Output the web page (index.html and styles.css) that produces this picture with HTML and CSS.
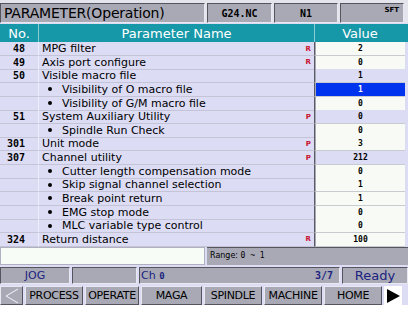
FILE: index.html
```html
<!DOCTYPE html>
<html>
<head>
<meta charset="utf-8">
<link rel="stylesheet" href="styles.css">
</head>
<body>
<div class="screen">
  <div class="titlebar">
    <div class="tcell title">PARAMETER(Operation)</div>
    <div class="tcell mono">G24.NC</div>
    <div class="tcell mono">N1</div>
    <div class="tcell sft">SFT</div>
  </div>
  <div class="thead">
    <div class="hcell">No.</div>
    <div class="hcell">Parameter Name</div>
    <div class="hcell">Value</div>
  </div>
  <div class="tbody">
    <div class="row"><div class="no">48</div><div class="name">MPG filter<span class="flag">R</span></div><div class="val">2</div></div>
    <div class="row"><div class="no">49</div><div class="name">Axis port configure<span class="flag">R</span></div><div class="val">0</div></div>
    <div class="row"><div class="no">50</div><div class="name">Visible macro file</div><div class="val lav">1</div></div>
    <div class="row"><div class="no"></div><div class="name sub">Visibility of O macro file</div><div class="val sel">1</div></div>
    <div class="row"><div class="no"></div><div class="name sub">Visibility of G/M macro file</div><div class="val">0</div></div>
    <div class="row"><div class="no">51</div><div class="name">System Auxiliary Utility<span class="flag">P</span></div><div class="val lav">0</div></div>
    <div class="row"><div class="no"></div><div class="name sub">Spindle Run Check</div><div class="val">0</div></div>
    <div class="row"><div class="no">301</div><div class="name">Unit mode<span class="flag">P</span></div><div class="val">3</div></div>
    <div class="row"><div class="no">307</div><div class="name">Channel utility<span class="flag">P</span></div><div class="val lav">212</div></div>
    <div class="row"><div class="no"></div><div class="name sub">Cutter length compensation mode</div><div class="val">0</div></div>
    <div class="row"><div class="no"></div><div class="name sub">Skip signal channel selection</div><div class="val">1</div></div>
    <div class="row"><div class="no"></div><div class="name sub">Break point return</div><div class="val">1</div></div>
    <div class="row"><div class="no"></div><div class="name sub">EMG stop mode</div><div class="val">0</div></div>
    <div class="row"><div class="no"></div><div class="name sub">MLC variable type control</div><div class="val">0</div></div>
    <div class="row"><div class="no">324</div><div class="name">Return distance<span class="flag">R</span></div><div class="val">100</div></div>
  </div>
  <div class="inputrow">
    <div class="input"></div>
    <div class="range">Range: <span class="mono">0 ~ 1</span></div>
  </div>
  <div class="status">
    <div class="scell jog">JOG</div>
    <div class="scell"></div>
    <div class="scell ch"><span>Ch <b class="mono">0</b></span><span class="mono pg">3/7</span></div>
    <div class="scell ready">Ready</div>
  </div>
  <div class="nav">
    <div class="nbtn arrow"><svg width="16" height="16" viewBox="0 0 16 16"><path d="M14 1 L2 8 L14 15" fill="none" stroke="#f4f4f8" stroke-width="1"/></svg></div>
    <div class="nbtn">PROCESS</div>
    <div class="nbtn">OPERATE</div>
    <div class="nbtn">MAGA</div>
    <div class="nbtn">SPINDLE</div>
    <div class="nbtn">MACHINE</div>
    <div class="nbtn">HOME</div>
    <div class="nbtn arrow"><svg width="16" height="16" viewBox="0 0 16 16"><path d="M2 1 L15 8 L2 15 Z" fill="#000"/></svg></div>
  </div>
</div>
</body>
</html>
```
FILE: styles.css
```css
html, body {
  margin: 0;
  padding: 0;
  background: #ffffff;
}
.screen {
  width: 408px;
  background: #dcdcf4;
  font-family: "DejaVu Sans", Verdana, sans-serif;
  display: flex;
  flex-direction: column;
  box-sizing: border-box;
}
.mono {
  font-family: "DejaVu Sans Mono", monospace;
}
.titlebar {
  display: grid;
  grid-template-columns: 205px 65px 64px 64px;
  column-gap: 2px;
  padding-top: 3px;
  height: 23px;
  background: #e4e4ec;
  box-sizing: border-box;
}
.tcell {
  background: #a9a9b6;
  border: 1px solid #55555f;
  border-right-color: #e8e8f0;
  border-bottom-color: #e8e8f0;
  display: flex;
  align-items: center;
  justify-content: center;
  font-size: 10px;
  font-weight: bold;
  color: #000;
  box-sizing: border-box;
}
.tcell.title {
  justify-content: flex-start;
  padding-left: 3px;
  font-size: 14px;
  font-weight: normal;
  letter-spacing: -0.2px;
}
.tcell.sft {
  justify-content: flex-end;
  align-items: flex-start;
  padding: 2px 4px 0 0;
  font-size: 7px;
}
.thead {
  display: grid;
  grid-template-columns: 39px 276px 90px;
  height: 18px;
  margin-top: 1px;
  background: #1798a8;
  color: #fff;
  font-size: 13px;
}
.hcell {
  display: flex;
  align-items: center;
  justify-content: center;
  border-right: 1px solid #8ccdd6;
}
.hcell:last-child {
  border-right: none;
}
.tbody {
  display: flex;
  flex-direction: column;
}
.row {
  display: grid;
  grid-template-columns: 39px 276px 90px;
  height: 13.64px;
  font-size: 11px;
  color: #000;
}
.no {
  font-family: "DejaVu Sans Mono", monospace;
  font-weight: bold;
  font-size: 10px;
  display: flex;
  align-items: center;
  justify-content: flex-end;
  padding-right: 13px;
  border-right: 1px solid #eeeefa;
  border-bottom: 1px solid #c4c4d6;
  box-sizing: border-box;
}
.name {
  display: flex;
  align-items: center;
  padding-left: 3px;
  border-right: 1px solid #5a5a66;
  border-bottom: 1px solid #c4c4d6;
  box-sizing: border-box;
  white-space: nowrap;
}
.name.sub {
  padding-left: 9px;
}
.name.sub::before {
  content: "";
  width: 4px;
  height: 4px;
  border-radius: 50%;
  background: #000;
  margin-right: 10px;
}
.flag {
  margin-left: auto;
  margin-right: 3px;
  color: #c8102e;
  font-size: 7px;
  font-weight: bold;
}
.val {
  background: #f8fbf5;
  display: flex;
  align-items: center;
  justify-content: center;
  font-family: "DejaVu Sans Mono", monospace;
  font-weight: bold;
  font-size: 8px;
  border-bottom: 1px solid #c8ccd0;
  border-left: 1px solid #a8a8b4;
  box-sizing: border-box;
}
.val.lav {
  background: #dcdcf4;
}
.val.sel {
  background: #0033ee;
  color: #fff;
}
.inputrow {
  display: grid;
  grid-template-columns: 205px 1fr;
  column-gap: 2px;
  height: 18px;
  margin-top: 1px;
}
.input {
  background: #f8fcf6;
  border: 1px solid #b0b0c0;
}
.range {
  background: #a9a9b6;
  font-size: 8px;
  padding: 3px 0 0 3px;
  border-top: 1px solid #55555f;
  white-space: pre;
}
.status {
  display: grid;
  grid-template-columns: 70px 65px 201px 1fr;
  column-gap: 2px;
  height: 17px;
  margin-top: 2px;
}
.scell {
  background: #a9a9b6;
  border: 1px solid #55555f;
  border-right-color: #e8e8f0;
  border-bottom-color: #e8e8f0;
  color: #1a237e;
  font-size: 11px;
  display: flex;
  align-items: center;
  box-sizing: border-box;
}
.scell.jog {
  justify-content: center;
}
.scell.ch {
  justify-content: space-between;
  padding: 0 6px 0 1px;
}
.scell.ch b {
  font-size: 9px;
}
.scell .pg {
  font-weight: bold;
  font-size: 10px;
}
.scell.ready {
  justify-content: center;
  font-size: 13px;
}
.nav {
  display: grid;
  grid-template-columns: 23px 58px 54px 61px 58px 58px 58px 18px;
  column-gap: 2px;
  height: 19px;
  margin-top: 2px;
  padding-right: 3px;
}
.nbtn {
  background: #a9a9b6;
  border: 1px solid #e8e8f0;
  border-right-color: #55555f;
  border-bottom-color: #55555f;
  font-size: 11px;
  color: #000;
  display: flex;
  align-items: center;
  justify-content: center;
  box-sizing: border-box;
  white-space: nowrap;
  letter-spacing: -0.3px;
}
.nbtn.arrow {
  padding: 0;
}
.nbtn.arrow:last-child {
  background: #ffffff;
  border: none;
}
```
